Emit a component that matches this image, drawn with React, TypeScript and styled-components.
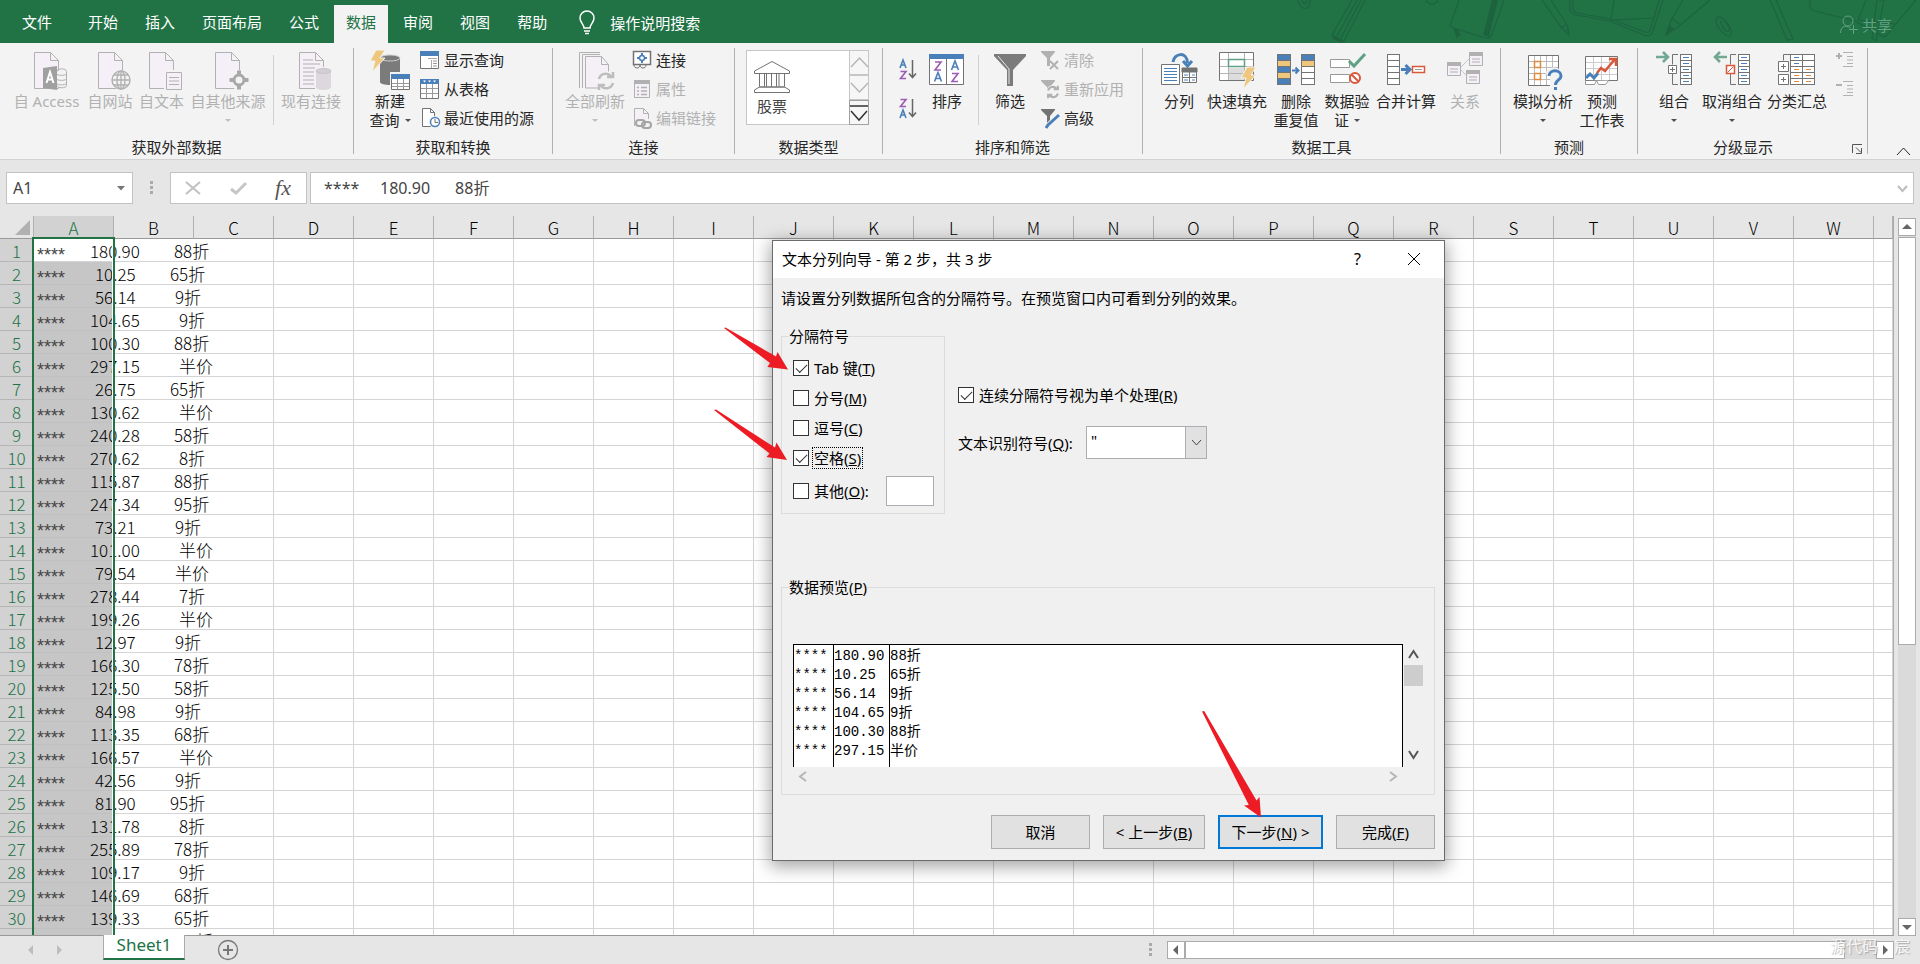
import React, { useState } from "react";
import styled, { createGlobalStyle, css } from "styled-components";

const ui = `"Noto Sans", "Noto Sans CJK SC", sans-serif`;
const green = "#217346";

const GlobalStyle = createGlobalStyle`
  *, *::before, *::after { box-sizing: border-box; }
  body { margin: 0; overflow: hidden; font: 15px/20px ${ui}; color: #262626; background: #e6e6e6; }
  button, input, select { font: inherit; color: inherit; }
  button { padding: 0; border: 0; background: none; }
  svg { display: block; overflow: visible; flex: none; }
`;

/* ---------- page frame ---------- */

const Page = styled.div`
  position: relative;
  display: flex;
  flex-direction: column;
  height: 100vh;
`;

const Header = styled.header`
  position: relative;
  display: flex;
  align-items: center;
  flex: none;
  height: 43px;
  padding-right: 28px;
  background: ${green};
  color: #fff;
`;

const Pattern = styled.svg`
  position: absolute;
  top: 0;
  right: 0;
`;

const Tabs = styled.nav`
  display: flex;
  align-self: stretch;
  gap: 3px;
  padding-top: 5px;
`;

const Tab = styled.button<{ $active?: boolean; $file?: boolean }>`
  padding: 0 12px 4px;
  ${(p) => p.$file && css`padding: 0 21px 4px 22px;`}
  ${(p) => p.$active && css`background: #f3f3f3; color: ${green};`}
`;

const TellMe = styled.button`
  display: flex;
  align-items: center;
  gap: 15px;
  margin-left: 20px;
  padding-top: 3px;
`;

const Share = styled.button`
  position: relative;
  display: flex;
  align-items: center;
  gap: 4px;
  margin-left: auto;
  padding-top: 6px;
  color: #63a181;
`;

/* ---------- ribbon ---------- */

const Ribbon = styled.section`
  position: relative;
  display: flex;
  flex: none;
  height: 117px;
  padding-top: 5px;
  background: #f3f3f3;
  border-bottom: 1px solid #d2d2d2;
`;

const Group = styled.section<{ $w: number; $pad: number }>`
  display: flex;
  flex-direction: column;
  justify-content: space-between;
  flex: none;
  width: ${(p) => p.$w}px;
  height: 106px;
  border-right: 1px solid #b1b1b1;
  & > div { padding-left: ${(p) => p.$pad}px; }
`;

const GroupBody = styled.div`
  display: flex;
  padding-top: 2px;
`;

const GroupLabel = styled.footer`
  display: flex;
  justify-content: center;
  align-items: center;
  gap: 4px;
  height: 14px;
  line-height: 14px;
`;

const LabelText = styled.span`
  flex: 1;
  text-align: center;
`;

const Launcher = styled.button`
  margin-right: 4px;
  padding-top: 4px;
`;

const BigButton = styled.button<{ $w: number }>`
  display: flex;
  flex-direction: column;
  align-items: center;
  flex: none;
  width: ${(p) => p.$w}px;
  height: 82px;
  line-height: 19px;
  white-space: nowrap;
  &:disabled { color: #b1b1b1; }
`;

const BigLine = styled.span`
  display: flex;
  align-items: center;
  gap: 5px;
  height: 19px;
`;

const Caret = styled.i`
  border: 3px solid transparent;
  border-top-color: currentColor;
  border-bottom-width: 0;
  opacity: 0.8;
`;

const Stack = styled.div<{ $left?: number }>`
  display: flex;
  flex-direction: column;
  margin-left: ${(p) => p.$left ?? 0}px;
`;

const SmallButton = styled.button`
  display: flex;
  align-items: center;
  gap: 4px;
  height: 29px;
  padding-bottom: 9px;
  white-space: nowrap;
  &:disabled { color: #b1b1b1; }
`;

const SortButton = styled.button`
  width: 24px;
  height: 39px;
`;

const Divider = styled.i<{ $l: number; $r: number }>`
  width: 1px;
  height: 70px;
  margin: 5px ${(p) => p.$r}px 0 ${(p) => p.$l}px;
  background: #d0d0d0;
`;

const Gallery = styled.div`
  display: flex;
  width: 123px;
  height: 75px;
  border: 1px solid #c6c6c6;
  background: #fff;
`;

const Stock = styled.button`
  display: flex;
  flex-direction: column;
  align-items: flex-start;
  flex: 1;
  gap: 3px;
  padding: 10px 0 0 7px;
  color: #444;
`;

const StockLabel = styled.span`
  padding-left: 3px;
`;

const GallerySteps = styled.div`
  display: grid;
  grid-template-rows: repeat(3, 1fr);
  width: 20px;
  margin: -1px;
`;

const Step = styled.button<{ $dark?: boolean }>`
  display: grid;
  place-items: center;
  border: 1px solid ${(p) => (p.$dark ? "#a0a0a0" : "#c6c6c6")};
  background: #f6f6f6;
  color: ${(p) => (p.$dark ? "#333" : "#b5b5b5")};
`;

const Collapse = styled.button`
  align-self: flex-end;
  margin: 0 10px 4px auto;
`;

/* ---------- formula bar ---------- */

const FormulaBar = styled.section`
  display: flex;
  align-items: center;
  flex: none;
  height: 56px;
  padding: 0 6px;
  color: #444;
  font-size: 16px;
`;

const Box = styled.div`
  display: flex;
  align-items: center;
  height: 32px;
  border: 1px solid #c3c3c3;
  background: #fff;
`;

const NameBox = styled(Box)`
  width: 127px;
  padding-right: 7px;
`;

const BarInput = styled.input`
  flex: 1;
  min-width: 0;
  padding: 0 0 0 6px;
  border: 0;
  outline: 0;
  background: none;
`;

const Dots = styled.svg`
  margin: 0 17px;
`;

const FxBox = styled(Box)`
  width: 137px;
  justify-content: space-between;
  padding: 0 15px 0 14px;
`;

const Fx = styled.button`
  font: italic 22px/24px "Liberation Serif", serif;
  color: #555;
`;

const FormulaBox = styled(Box)`
  flex: 1;
  margin-left: 3px;
  padding: 0 6px 0 7px;
`;

const Expand = styled.button`
  color: #bdbdbd;
`;

/* ---------- sheet ---------- */

const SheetArea = styled.main`
  display: flex;
  flex: 1;
  min-height: 0;
  padding-right: 4px;
`;

const GridPane = styled.div`
  position: relative;
  flex: 1;
  overflow: hidden;
  background: #fff;
  border-right: 1px solid #ababab;
  border-bottom: 1px solid #999;
`;

const Grid = styled.table`
  width: 100%;
  table-layout: fixed;
  border-collapse: separate;
  border-spacing: 0;
  font: 300 17px/22px "Noto Sans CJK SC", sans-serif;
  color: #000;
`;

const RowNoCol = styled.col`width: 34px;`;
const DataCol = styled.col`width: 80px;`;

const ColHead = styled.th<{ $on?: boolean }>`
  height: 23px;
  padding: 2px 0 0;
  border-right: 1px solid #b1b1b1;
  border-bottom: 1px solid #999;
  background: ${(p) => (p.$on ? "#d2d2d2" : "#e6e6e6")};
  color: ${(p) => (p.$on ? green : "#000")};
  font-size: 17px;
  font-weight: 300;
  line-height: 20px;
`;

const Corner = styled(ColHead)`
  padding: 0 3px 3px 15px;
  vertical-align: bottom;
`;

const RowHead = styled.th`
  height: 23px;
  padding: 2px 1px 0 0;
  border-bottom: 1px solid #b5b5b5;
  background: #d2d2d2;
  color: ${green};
  font-size: 17px;
  font-weight: 300;
  line-height: 20px;
  text-align: center;
`;

const Cell = styled.td<{ $fill?: boolean; $open?: boolean }>`
  height: 23px;
  padding: 0;
  border-right: ${(p) => (p.$open ? "0" : "1px solid #d4d4d4")};
  border-bottom: 1px solid ${(p) => (p.$fill ? "#c0c0c0" : "#d4d4d4")};
  background: ${(p) => (p.$fill ? "#c6c6c6" : "transparent")};
`;

const Record = styled.div`
  position: relative;
  display: flex;
  width: 200px;
  height: 22px;
  padding: 2px 0 0 3px;
  line-height: 20px;
  white-space: nowrap;
`;

const Stars = styled.span<{ $short: boolean }>`
  width: ${(p) => (p.$short ? 58 : 53)}px;
  padding-top: 4px;
  font-family: "Liberation Sans", sans-serif;
  font-size: 18px;
  color: #444;
`;

const Amount = styled.span<{ $short: boolean }>`
  width: ${(p) => (p.$short ? 75 : 84)}px;
`;

const Discount = styled.span<{ $indent: boolean }>`
  padding-left: ${(p) => (p.$indent ? 5 : 0)}px;
`;

const Selection = styled.div`
  position: absolute;
  top: 21px;
  bottom: -4px;
  left: 32px;
  width: 83px;
  border: 2px solid ${green};
  box-shadow: inset -1px 0 0 #fff;
`;

const VScroll = styled.div`
  display: flex;
  flex-direction: column;
  width: 18px;
  margin: 2px 0 0 4px;
  background: #dadada;
`;

const ScrollButton = styled.button`
  display: grid;
  place-items: center;
  flex: none;
  width: 18px;
  height: 18px;
  border: 1px solid #ababab;
  background: #fff;
  color: #666;
`;

const VThumb = styled.i`
  flex: 406 0 0;
  margin-top: 1px;
  border: 1px solid #ababab;
  background: #fff;
`;

const VTrack = styled.i`flex: 273 0 0;`;

/* ---------- sheet tabs ---------- */

const Bottom = styled.footer`
  position: relative;
  display: flex;
  align-items: center;
  flex: none;
  height: 28px;
  padding: 0 26px 0;
`;

const TabNav = styled.div`
  display: flex;
  gap: 18px;
  color: #bdbdbd;
`;

const SheetTab = styled.button`
  align-self: flex-start;
  width: 82px;
  height: 25px;
  margin: -1px 32px 0 39px;
  padding-bottom: 3px;
  border: 1px solid #ababab;
  border-top: 0;
  border-bottom: 2px solid ${green};
  background: #fff;
  color: ${green};
  font-size: 17px;
  line-height: 20px;
`;

const Spacer = styled.i`flex: 1;`;

const HScroll = styled.div`
  display: flex;
  width: 727px;
  height: 18px;
  margin-left: 15px;
  background: #dadada;
`;

const HThumb = styled.i`
  flex: 660 0 0;
  border: 1px solid #ababab;
  background: #fff;
`;

const HTrack = styled.i`flex: 31 0 0;`;

const Watermark = styled.span`
  position: absolute;
  top: 0;
  right: 10px;
  font-size: 16px;
  color: #fff;
  opacity: 0.75;
  text-shadow: 1px 1px 1px #999;
  white-space: pre;
  pointer-events: none;
`;

/* ---------- dialog ---------- */

const Dialog = styled.form`
  position: absolute;
  top: 240px;
  left: 772px;
  width: 673px;
  border: 1px solid #6b6b6b;
  background: #f0f0f0;
  color: #000;
  box-shadow: 0 4px 16px 2px rgba(0, 0, 0, 0.35);
`;

const TitleBar = styled.header`
  display: flex;
  align-items: center;
  height: 37px;
  padding: 0 23px 2px 9px;
  background: #fff;
`;

const Title = styled.h1`
  flex: 1;
  margin: 0;
  font-size: 15px;
  font-weight: 400;
`;

const Help = styled.button`
  margin-right: 46px;
  font-size: 16px;
`;

const DialogBody = styled.div`
  padding: 10px 9px 11px 8px;
`;

const Intro = styled.p`margin: 0 0 18px;`;

const Options = styled.div`
  display: flex;
  margin-bottom: 63px;
`;

const FieldSet = styled.fieldset`
  min-width: 0;
  margin: 0;
  padding: 0 7px 7px;
  border: 1px solid #dcdcdc;
`;

const DelimiterSet = styled(FieldSet)`width: 164px;`;

const Legend = styled.legend`padding: 0;`;

const Checks = styled.div`
  display: flex;
  flex-direction: column;
  padding: 7px 3px 0 4px;
`;

const CheckRow = styled.div<{ $gap?: boolean }>`
  display: flex;
  align-items: center;
  height: 30px;
  margin-top: ${(p) => (p.$gap ? 3 : 0)}px;
`;

const Check = styled.input`
  appearance: none;
  display: grid;
  place-items: center;
  flex: none;
  width: 16px;
  height: 16px;
  margin: 0 3px 0 0;
  border: 1px solid #333;
  background: #fff;
  &:checked::before {
    content: "";
    width: 11px;
    height: 6px;
    margin-top: -3px;
    border: solid #333;
    border-width: 0 0 1px 1px;
    transform: rotate(-45deg);
  }
`;

const CheckLabel = styled.label<{ $focus?: boolean }>`
  padding: 0 1px;
  border: 1px dotted ${(p) => (p.$focus ? "#000" : "transparent")};
  white-space: nowrap;
`;

const OtherInput = styled.input`
  width: 48px;
  height: 30px;
  margin-left: auto;
  border: 1px solid #abadb3;
  background: #fff;
`;

const SideOptions = styled.div`
  display: flex;
  flex-direction: column;
  gap: 16px;
  padding: 54px 0 0 13px;
`;

const SelectRow = styled.div`
  display: flex;
  align-items: center;
`;

const SelectLabel = styled.label`width: 128px;`;

const SelectWrap = styled.div`
  position: relative;
  width: 121px;
`;

const Select = styled.select`
  appearance: none;
  display: block;
  width: 100%;
  height: 33px;
  padding: 0 26px 6px 4px;
  border: 1px solid #abadb3;
  border-radius: 0;
  background: #fff;
`;

const SelectArrow = styled.span`
  position: absolute;
  inset: 0 0 0 auto;
  display: grid;
  place-items: center;
  width: 22px;
  border: 1px solid #abadb3;
  background: #e1e1e1;
  color: #444;
  pointer-events: none;
`;

const Preview = styled.div`
  display: grid;
  grid-template-columns: 1fr 20px;
  grid-template-rows: 123px 20px;
  padding: 47px 4px 0;
`;

const PreviewPane = styled.div`
  overflow: hidden;
  border: 1px solid #000;
  border-bottom: 0;
  background: #fff;
`;

const PreviewTable = styled.table`
  width: 100%;
  height: 122px;
  table-layout: fixed;
  border-collapse: separate;
  border-spacing: 0;
  font: 14px/18px "Liberation Mono", "Noto Sans CJK SC", monospace;
  color: #000;
  tr:first-child td { padding-top: 2px; height: 21px; }
  tr:last-child td { height: auto; }
`;

const PreviewCell = styled.td<{ $w?: number; $last?: boolean }>`
  ${(p) => p.$w && css`width: ${p.$w}px;`}
  height: 19px;
  padding: 0;
  border-right: ${(p) => (p.$last ? "0" : "1px solid #000")};
  vertical-align: top;
`;

const PreviewScroll = styled.div`
  display: flex;
  flex-direction: column;
  align-items: center;
  padding: 7px 0 9px;
  color: #555;
`;

const PreviewThumb = styled.i`
  width: 19px;
  height: 21px;
  margin: 7px 0 auto;
  background: #cdcdcd;
`;

const PreviewHScroll = styled.div`
  display: flex;
  justify-content: space-between;
  align-items: center;
  padding: 0 7px 2px;
  color: #b5b5b5;
`;

const Actions = styled.div`
  display: flex;
  justify-content: flex-end;
  gap: 13px;
  margin-top: 20px;
`;

const Action = styled.button<{ $w: number; $primary?: boolean }>`
  width: ${(p) => p.$w}px;
  height: 34px;
  border: ${(p) => (p.$primary ? "2px solid #0078d7" : "1px solid #adadad")};
  background: #e1e1e1;
`;

const Pointers = styled.svg`
  position: absolute;
  top: 0;
  left: 0;
  pointer-events: none;
`;

/* ---------- icons ---------- */

const G = "#b1b1b1";
const D = "#737373";
const B = "#4a80b9";
const Y = "#efc77c";
const P = "#f5f0f7";

const Big = ({ children }: { children: React.ReactNode }) => (
  <svg width="40" height="42" fill="none" strokeWidth="1" aria-hidden="true">{children}</svg>
);
const Small = ({ children }: { children: React.ReactNode }) => (
  <svg width="20" height="20" fill="none" strokeWidth="1" aria-hidden="true">{children}</svg>
);
const Sheet = ({ x = 7 }: { x?: number }) => (
  <path transform={`translate(${x} 0)`} d="M.5 2.5h16l8 8V38.500H.5zM16.500 2.500v8h8" fill={P} stroke={G} />
);
const Chevron = ({ d, w = 13, h = 7, sw = 1 }: { d: "up" | "down" | "left" | "right"; w?: number; h?: number; sw?: number }) => {
  const paths = {
    up: `M0 ${h}L${w / 2} 0L${w} ${h}`,
    down: `M0 0L${w / 2} ${h}L${w} 0`,
    left: `M${w} 0L0 ${h / 2}L${w} ${h}`,
    right: `M0 0L${w} ${h / 2}L0 ${h}`,
  };
  return <svg width={w} height={h} fill="none" stroke="currentColor" strokeWidth={sw} aria-hidden="true"><path d={paths[d]} /></svg>;
};
const Tri = ({ d }: { d: "up" | "down" | "left" | "right" }) => {
  const paths = { up: "M0 7L5 2L10 7z", down: "M0 3L5 8L10 3z", left: "M7 0L2 5L7 10z", right: "M3 0L8 5L3 10z" };
  return <svg width="10" height="10" fill="currentColor" aria-hidden="true"><path d={paths[d]} /></svg>;
};

const AccessIcon = () => (
  <Big>
    <Sheet />
    <path d="M30 21v16h10V21z" fill="#f3f3f3" />
    <path d="M30 21.500c0-3.500 9.500-3.500 9.500 0v14c0 3-9.500 3-9.500 0M30 24.500c3 1.500 9.500 1 9.500-1M30 29.500c3 1.500 9.500 1 9.500-1M30 34c3 1.500 9.500 1 9.500-1" stroke={G} />
    <path d="M16 18l14-2v24l-14-2z" fill="#a0a0a0" />
    <path d="M19.500 33l3.500-11 3.500 11M20.500 29.500h5" stroke="#fff" strokeWidth="2" />
  </Big>
);
const WebIcon = () => (
  <Big>
    <Sheet x={8} />
    <circle cx="31" cy="30" r="10" fill="#f3f3f3" />
    <g stroke={G} strokeWidth="1.400"><circle cx="31" cy="30" r="9" /><ellipse cx="31" cy="30" rx="4" ry="9" /><path d="M22 30h18M31 21v18M24 25h14M24 35h14" /></g>
  </Big>
);
const TextIcon = () => (
  <Big><Sheet /><path d="M22 20h18v20H22z" fill="#f3f3f3" /><path d="M24.500 22.500h15v17h-15z" fill={P} stroke={G} /><path d="M27 27.500h10M27 31h10M27 34.500h10" stroke={G} /></Big>
);
const OtherIcon = () => (
  <Big><Sheet /><circle cx="31" cy="30" r="10" fill="#f3f3f3" /><circle cx="31" cy="30" r="5" stroke="#a8a8a8" strokeWidth="3" /><path d="M31 20.500v5M31 34.500v5M21.500 30h5M35.500 30h5" stroke="#a8a8a8" strokeWidth="4" /></Big>
);
const ConnIcon = () => (
  <Big>
    <Sheet x={8} />
    <path d="M12 10h10M12 14h17M12 18h17M12 22h11M12 26h11M12 30h11M12 34h11" stroke={G} />
    <path d="M24 17h18v24H24z" fill="#f3f3f3" />
    <path d="M25 21v16c0 4 15 4 15 0V21" fill="#dcd8de" /><ellipse cx="32.500" cy="21" rx="7.500" ry="2.500" fill="#d3ced6" stroke="#c8c3cb" />
  </Big>
);
const bolt = "M6 0h9l-5 8h5L2 22l3-11H0z";
const NewQueryIcon = () => (
  <Big>
    <path d="M10 8v24c0 4 20 4 20 0V8z" fill="#7b7b7b" /><ellipse cx="20" cy="8" rx="10" ry="3" fill="#7b7b7b" stroke="#ccc" />
    <path d={bolt} fill={Y} stroke="#f3f3f3" />
    <path d="M20 22h21v19H20z" fill="#f3f3f3" /><path d="M21.500 24.500h18v15h-18z" fill="#fff" stroke={D} />
    <path d="M21 24h19v5H21z" fill={B} /><path d="M22 33.500h17M22 36.500h17M27.500 29v10M33.500 29v10" stroke="#999" />
  </Big>
);
const arc = "M-7-2a7 7 0 0 1 12-3M7-9v5h-6M7 2a7 7 0 0 1-12 3M-7 9v-5h6";
const RefreshIcon = () => (
  <Big>
    <path d="M4.500 38V2.500H25M7.500 38V4.500H25" stroke={G} /><g transform="translate(3 4)"><path d="M7.500 2.500h16l7 8V34H7.500zM23.500 2.500v8h7" fill={P} stroke={G} /></g>
    <circle cx="31" cy="31" r="10" fill="#f3f3f3" /><path transform="translate(31 31)" d={arc} stroke="#bdbdbd" strokeWidth="2.500" />
  </Big>
);
const SortIcon = () => (
  <Big>
    <path d="M2.500 4.500h34v30h-34zM19.500 9v25" fill="#fff" stroke={D} /><path d="M2 4h35v5H2z" fill={B} />
    <g fill="none" strokeWidth="1.600"><path d="M8 12h6l-6 8h6M25 23.500h6l-6 8h6" stroke="#9a5cb5" /><path d="M7.500 31.500l3.500-9 3.500 9M9 28.500h4M24.500 20l3.500-9 3.500 9M26 17h4" stroke={B} /></g>
  </Big>
);
const AZIcon = ({ flip }: { flip?: boolean }) => (
  <svg width="18" height="22" fill="none" strokeWidth="1.600" aria-hidden="true">
    <g transform={flip ? "translate(0 11)" : undefined}><path d="M1 9l3-8 3 8M2 6h4" stroke={B} /></g>
    <g transform={flip ? "translate(0 -11)" : undefined}><path d="M1.500 12.500h5.500l-5.500 7h5.500" stroke="#9a5cb5" /></g>
    <path d="M13.500 1v17M10 14.500l3.500 4 3.500-4" stroke="#666" strokeWidth="1.500" />
  </svg>
);
const funnel = "M4 4h32v2L23 20v16h-6V20L4 6z";
const FilterIcon = () => <Big><path d={funnel} fill="#7b7b7b" /><path d="M8 6l11 13v15" stroke="#e8e8e8" /></Big>;
const SplitIcon = () => (
  <Big>
    <path d="M2.500 14.500h18v20h-18z" fill="#fff" stroke={D} /><path d="M5 18.500h13M5 21.500h13M5 24.500h13M5 27.500h13M5 30.500h13" stroke={B} />
    <path d="M23.500 18.500h14v14h-14z" fill="#fff" stroke={D} /><path d="M23 18h15v4H23zM30.500 22v10M23 27.500h15" stroke={D} fill={D} />
    <path d="M25 25h4M33 25h3M25 30h4M33 30h3" stroke={B} />
    <path d="M14 12C15 3 28 1 28.500 13M24 11l4.500 5 4.500-5" stroke={B} strokeWidth="3" />
  </Big>
);
const FillIcon = () => (
  <Big>
    <path d="M2.500 2.500h34v28h-34z" fill="#fff" stroke={D} /><path d="M11 18h17v12H11z" fill="#ddd" />
    <path d="M11.500 3v27M27.500 3v27M3 9.500h33M3 16.500h33M3 23.500h33" stroke="#b5b5b5" /><path d="M11.500 9.500h16v7h-16z" fill="#fff" stroke="#5fa184" strokeWidth="1.500" />
    <path transform="translate(24 17)" d={bolt} fill={Y} stroke="#f3f3f3" />
  </Big>
);
const Rows = ({ x, w, fills, stroke = D }: { x: number; w: number; fills: string[]; stroke?: string }) => (
  <>{fills.map((f, i) => <rect key={i} x={x + 0.5} y={4.5 + i * 6} width={w} height={6} fill={f} stroke={stroke} />)}</>
);
const DedupIcon = () => (
  <Big>
    <Rows x={1} w={13} fills={[B, Y, B, Y, B]} /><Rows x={25} w={13} fills={[B, Y, "#fff", "#fff", "#fff"]} />
    <path d="M16 20.500h6M19.500 17.500l3 3-3 3" stroke={B} strokeWidth="2" />
  </Big>
);
const ValidIcon = () => (
  <Big>
    <path d="M3.500 9.500h19v8h-19zM3.500 24.500h19v8h-19z" fill="#fff" stroke="#999" /><path d="M22 11l5 5L38 4" stroke="#5fa184" strokeWidth="3" />
    <circle cx="28" cy="28" r="5" fill="#fff" stroke="#d9573b" strokeWidth="2" /><path d="M24.500 24.500l7 7" stroke="#d9573b" strokeWidth="2" />
  </Big>
);
const ConsIcon = () => (
  <Big>
    <Rows x={1} w={12} fills={["#fff", "#fff", "#fff", "#fff", "#fff"]} /><path d="M15 19.500h8M19.500 15l4.500 4.500-4.500 4.500" stroke={B} strokeWidth="3" />
    <path d="M26.500 16.500h12v6h-12z" fill="#fff" stroke="#d9573b" strokeWidth="1.500" /><path d="M29 19.500h7" stroke="#999" />
  </Big>
);
const RelIcon = () => (
  <Big>
    <path d="M15 18l9-9M15 19l7 7" stroke="#c5c5c5" />
    {[[2, 12], [24, 2], [21, 20]].map(([x, y]) => (
      <g key={x} transform={`translate(${x} ${y})`}><path d="M.5.5h13v13H.5z" fill={P} stroke={G} /><path d="M0 0h14v4H0z" fill={G} /><path d="M3 7h8M3 10h8" stroke={G} /></g>
    ))}
  </Big>
);
const WhatIfIcon = () => (
  <Big>
    <path d="M5.500 5.500h30v30h-30z" fill="#fff" stroke={D} /><path d="M11.500 6v29M17.500 6v29M23.500 6v29M29.500 6v29M6 11.500h29M6 17.500h29M6 23.500h29M6 29.500h29" stroke="#bbb" />
    <path d="M11.500 11.500h6v6h-6zM11.500 23.500h6v6h-6z" stroke="#e08a3c" strokeWidth="1.500" />
    <path d="M23 24c0-9 17-9 17 2v15H27V27z" fill="#f3f3f3" /><path d="M26 26c0-7 12-7 12 0 0 4-5.500 4-5.500 9M32.500 37v3" stroke={B} strokeWidth="3" />
  </Big>
);
const ForecastIcon = () => (
  <Big>
    <path d="M3.500 6.500h32v24h-32z" fill="#fff" stroke={D} /><path d="M11.500 7v23M19.500 7v23M27.500 7v23M4 12.500h31M4 18.500h31M4 24.500h31" stroke="#ccc" />
    <path d="M3.500 31v3.500h9l2-4 2 4h7l3-4" fill="#fff" stroke="#999" /><path d="M4 28l4-4 4 4 4-5" stroke={B} strokeWidth="3" /><path d="M15 23l4-5 4 3 10-12M27 9h7v7" stroke="#d9573b" strokeWidth="2.500" />
  </Big>
);
const GroupIcon = ({ un }: { un?: boolean }) => (
  <Big>
    <path d={un ? "M15 7H4M8 2L3 7l5 5" : "M2 7h11M9 2l5 5-5 5"} stroke="#72a892" strokeWidth="2.500" />
    <path d="M24 4.500h-5.500v10M18.500 24v10.500H24" stroke={D} /><path d="M14.500 15.500h8v8h-8z" fill="#fff" stroke={un ? "#d9573b" : D} strokeWidth={un ? 1.5 : 1} />
    <path d={un ? "M15.500 22.500l6-6" : "M16 19.500h5M18.500 17v5"} stroke={un ? "#d9573b" : D} />
    <Rows x={26} w={11} fills={["#fff", "#fff", "#fff", "#fff", "#fff"]} /><path d="M29 7.500h6M29 13.500h6M29 19.500h6M29 25.500h6M29 31.500h6" stroke={B} />
  </Big>
);
const SubtotalIcon = () => (
  <Big>
    <path d="M13 4.500H6.500v6" stroke={D} /><path d="M1.500 11.500h10v10h-10zM1.500 24.500h10v10h-10z" fill="#fff" stroke={D} /><path d="M4 16.500h5M6.500 14v5M4 29.500h5M6.500 27v5" stroke={D} />
    <Rows x={13} w={12} fills={["#fff", "#fff", "#fff", "#fff", "#fff"]} /><Rows x={25} w={12} fills={["#fff", "#fff", "#fff", "#fff", "#fff"]} />
    <path d="M17 7.500h5M17 13.500h5" stroke={B} /><path d="M17 19.500h5M17 25.500h5M17 31.500h5M29 19.500h5M29 25.500h5M29 31.500h5" stroke="#e08a3c" />
  </Big>
);
const BankIcon = () => (
  <svg width="36" height="32" fill="none" stroke="#737373" aria-hidden="true">
    <path d="M.5 10L18 .5 35.500 10v2.500H.5zM5.500 12.500v13M10.500 12.500v13M12.500 12.500v13M17.500 12.500v13M22.500 12.500v13M25 12.500v13M30.500 12.500v13M5 26h26M.5 31.500v-2.500l5-3h25l5 3v2.500z" />
  </svg>
);
const PaneIcon = () => <Small><path d="M.5 1.500h18v17H.5z" fill="#fff" stroke={D} /><path d="M0 1h19v5H0z" fill={B} /><path d="M8 8.500h9M11.500 10v8" stroke="#aaa" /><path d="M13 11h4M13 13.500h4M13 16h4" stroke="#999" /></Small>;
const TableIcon = () => <Small><path d="M.5.5h18v19H.5z" fill="#fff" stroke={D} /><path d="M0 0h19v5H0z" fill={B} /><path d="M3 1.500h3l-1.500 2zM8 1.500h3l-1.500 2zM13 1.500h3l-1.500 2z" fill="#fff" /><path d="M1 9.500h17M1 14.500h17M6.500 5v14M12.500 5v14" stroke="#999" /></Small>;
const RecentIcon = () => <Small><path d="M2.500.5h8l4 4v14h-12zM10.500.5v4h4" fill="#fff" stroke={D} /><circle cx="15" cy="14" r="6" fill="#f3f3f3" /><circle cx="15" cy="14" r="4.500" fill="#fff" stroke={B} strokeWidth="1.500" /><path d="M15 11v3.500h3" stroke={D} /></Small>;
const LinkIcon = () => <Small><path d="M1.500 1.500h17v13h-17z" fill="#fff" stroke={D} strokeWidth="1.500" /><path d="M2 15c0 4 6 4 6 0M8 15c0 4 6 4 6 0" stroke={D} /><circle cx="10" cy="8" r="2.500" stroke={B} strokeWidth="1.500" /><path d="M10 3v2M10 11v2M5 8h2M13 8h2" stroke={B} strokeWidth="2" /></Small>;
const PropIcon = () => <Small><path d="M2.500 1.500h15v17h-15z" fill={P} stroke={G} /><path d="M2 1h16v4H2z" fill={G} /><path d="M9 8.500h6M9 12h6M9 15.500h6M5 8.500h2M5 12h2M5 15.500h2" stroke={G} strokeWidth="1.500" /></Small>;
const EditLinkIcon = () => <Small><path d="M2.500 18V.5h9l5 5V11M11.500.5v5h5" fill={P} stroke={G} /><rect x="4" y="12" width="9" height="6" rx="3" stroke="#a5a5a5" strokeWidth="2" /><rect x="10" y="14" width="9" height="6" rx="3" stroke="#a5a5a5" strokeWidth="2" /></Small>;
const smallFunnel = "M1 1h14v1l-5 6v8H7V8L1 2z";
const ClearIcon = () => <Small><path d={smallFunnel} fill={G} /><path d="M10 11l8 8M18 11l-8 8" stroke={G} strokeWidth="2" /></Small>;
const ReapplyIcon = () => <Small><path d={smallFunnel} fill={G} /><circle cx="13" cy="13" r="7" fill="#f3f3f3" /><path transform="translate(13 13) scale(.7)" d={arc} stroke={G} strokeWidth="3" /></Small>;
const AdvIcon = () => <Small><path d={smallFunnel} fill={D} /><path d="M19 7L8 18" stroke="#f3f3f3" strokeWidth="6" /><path d="M19 7L8 17l-2 3" stroke={B} strokeWidth="3" /></Small>;
const DetailIcon = ({ plus }: { plus?: boolean }) => (
  <svg width="18" height="29" fill="none" stroke={G} aria-hidden="true"><path d={plus ? "M0 6h6M3 3v6" : "M0 6h6"} strokeWidth="2" /><path d="M7 2.500h10M11 6.500h6M11 10h6M11 13.500h6M7 16.500h10" strokeWidth="1" /></svg>
);

/* ---------- data ---------- */

const records: [string, string][] = [
  ["180.90", "88折"], ["10.25", "65折"], ["56.14", "9折"], ["104.65", "9折"], ["100.30", "88折"],
  ["297.15", "半价"], ["26.75", "65折"], ["130.62", "半价"], ["240.28", "58折"], ["270.62", "8折"],
  ["115.87", "88折"], ["247.34", "95折"], ["73.21", "9折"], ["101.00", "半价"], ["79.54", "半价"],
  ["278.44", "7折"], ["199.26", "半价"], ["12.97", "9折"], ["166.30", "78折"], ["125.50", "58折"],
  ["84.98", "9折"], ["113.35", "68折"], ["166.57", "半价"], ["42.56", "9折"], ["81.90", "95折"],
  ["131.78", "8折"], ["255.89", "78折"], ["109.17", "9折"], ["146.69", "68折"], ["139.33", "65折"],
  ["", "　折"],
];
const letters = "ABCDEFGHIJKLMNOPQRSTUVW".split("");

type BigProps = { icon: React.ReactNode; w: number; lines: string[]; caret?: boolean; inline?: boolean; disabled?: boolean };
const RibbonButton = ({ icon, w, lines, caret, inline, disabled }: BigProps) => (
  <BigButton $w={w} type="button" disabled={disabled}>
    {icon}
    {lines.map((line, i) => (
      <BigLine key={line}>{line}{inline && i === lines.length - 1 && <Caret />}</BigLine>
    ))}
    {caret && <BigLine><Caret /></BigLine>}
  </BigButton>
);

const Mnemonic = ({ text, k, after = "" }: { text: string; k: string; after?: string }) => (
  <>{text}(<u>{k}</u>){after}</>
);

const HeaderPattern = () => (
  <Pattern width="640" height="43" fill="none" stroke="#1d6340" strokeWidth="1.200" aria-hidden="true">
    <path d="M18 0c2 12 14 12 12-3M22 0c1 5 6 5 5-1M72 0L52 35l12 6L85 0M77 0L57 36M81 0L61 38M146 0c4 6 9 5 12 0M179 0l-9 26 6 3 30 9c4 1 5-2 6-4L224 0" />
    <path d="M52 35l12 6-2 2-9-4zM212 0h6l-9 37-6-2zM173 28l4 11 1-4 3 2-3-8z" fill="#1d6340" stroke="none" />
    <path d="M262 0l19 27 8 8-2-10L271 0M281 28l6-4M290 0v9c0 4 2 5 6 6l34 6 34 14c6 2 8 0 9-4l10-31M293 0v8c0 3 1 4 4 5l34 6 34 13c4 1 5-1 6-4L379 0M334 0l-3 20 42-2M403 0l-12 20-5 15 12-8L430 0M391 18l10 7M437 18c-4 4 7 20 13 18 6-3-7-23-13-18zM441 21c-1 4 6 13 8 10s-3-9-5-9" />
    <path d="M389 24l-4 11 9-6zM287 30l2 5 0-9z" fill="#1d6340" stroke="none" />
    <path d="M490 0l17 40 6-1L496 0M530 0v6c0 3 2 4 5 5l40 10 25 14c5 3 7 1 9-3L636 0M586 0l-8 20 38 4M597 0h7l-8 41-4-3z" />
  </Pattern>
);

export default function App() {
  const [checks, setChecks] = useState<Record<string, boolean>>({ tab: true, semi: false, comma: false, space: true, other: false, merge: true });
  const toggle = (k: string) => () => setChecks((c) => ({ ...c, [k]: !c[k] }));
  const delimiters: [string, string, string, string][] = [
    ["tab", "Tab 键", "T", ""], ["semi", "分号", "M", ""], ["comma", "逗号", "C", ""], ["space", "空格", "S", ""], ["other", "其他", "O", ":"],
  ];

  return (
    <Page>
      <GlobalStyle />
      <Header>
        <HeaderPattern />
        <Tabs>
          {["文件", "开始", "插入", "页面布局", "公式", "数据", "审阅", "视图", "帮助"].map((t) => (
            <Tab key={t} type="button" $active={t === "数据"} $file={t === "文件"}>{t}</Tab>
          ))}
        </Tabs>
        <TellMe type="button">
          <svg width="16" height="24" fill="none" stroke="#fff" strokeWidth="1.500" aria-hidden="true">
            <path d="M5 17c0-4-4-5-4-10a7 7 0 0 1 14 0c0 5-4 6-4 10zM5 20h6M6 22.500h4" />
          </svg>
          操作说明搜索
        </TellMe>
        <Share type="button">
          <svg width="18" height="20" fill="none" stroke="currentColor" aria-hidden="true"><circle cx="8" cy="6" r="5" /><path d="M.5 18c0-9 8-7 10-5M13.500 10v9M9 14.500h9" /></svg>
          共享
        </Share>
      </Header>

      <Ribbon>
        <Group $w={354} $pad={8}>
          <GroupBody>
            <RibbonButton icon={<AccessIcon />} w={77} lines={["自 Access"]} disabled />
            <RibbonButton icon={<WebIcon />} w={50} lines={["自网站"]} disabled />
            <RibbonButton icon={<TextIcon />} w={53} lines={["自文本"]} disabled />
            <RibbonButton icon={<OtherIcon />} w={80} lines={["自其他来源"]} caret disabled />
            <Divider $l={5} $r={4} />
            <RibbonButton icon={<ConnIcon />} w={66} lines={["现有连接"]} disabled />
          </GroupBody>
          <GroupLabel>获取外部数据</GroupLabel>
        </Group>
        <Group $w={199} $pad={8}>
          <GroupBody>
            <RibbonButton icon={<NewQueryIcon />} w={56} lines={["新建", "查询"]} inline />
            <Stack $left={2}>
              <SmallButton type="button"><PaneIcon />显示查询</SmallButton>
              <SmallButton type="button"><TableIcon />从表格</SmallButton>
              <SmallButton type="button"><RecentIcon />最近使用的源</SmallButton>
            </Stack>
          </GroupBody>
          <GroupLabel>获取和转换</GroupLabel>
        </Group>
        <Group $w={182} $pad={8}>
          <GroupBody>
            <RibbonButton icon={<RefreshIcon />} w={68} lines={["全部刷新"]} caret disabled />
            <Stack $left={3}>
              <SmallButton type="button"><LinkIcon />连接</SmallButton>
              <SmallButton type="button" disabled><PropIcon />属性</SmallButton>
              <SmallButton type="button" disabled><EditLinkIcon />编辑链接</SmallButton>
            </Stack>
          </GroupBody>
          <GroupLabel>连接</GroupLabel>
        </Group>
        <Group $w={148} $pad={11}>
          <GroupBody>
            <Gallery>
              <Stock type="button"><BankIcon /><StockLabel>股票</StockLabel></Stock>
              <GallerySteps>
                <Step type="button" aria-label="上一行"><Chevron d="up" w={17} h={9} sw={1.5} /></Step>
                <Step type="button" aria-label="下一行"><Chevron d="down" w={17} h={9} sw={1.5} /></Step>
                <Step type="button" aria-label="其他" $dark>
                  <svg width="18" height="16" fill="none" stroke="currentColor" strokeWidth="1.500" aria-hidden="true"><path d="M0 1h18M1 6l8 9 8-9" /></svg>
                </Step>
              </GallerySteps>
            </Gallery>
          </GroupBody>
          <GroupLabel>数据类型</GroupLabel>
        </Group>
        <Group $w={260} $pad={16}>
          <GroupBody>
            <Stack>
              <SortButton type="button" aria-label="升序"><AZIcon /></SortButton>
              <SortButton type="button" aria-label="降序"><AZIcon flip /></SortButton>
            </Stack>
            <RibbonButton icon={<SortIcon />} w={48} lines={["排序"]} />
            <Divider $l={7} $r={8} />
            <RibbonButton icon={<FilterIcon />} w={46} lines={["筛选"]} />
            <Stack $left={7}>
              <SmallButton type="button" disabled><ClearIcon />清除</SmallButton>
              <SmallButton type="button" disabled><ReapplyIcon />重新应用</SmallButton>
              <SmallButton type="button"><AdvIcon />高级</SmallButton>
            </Stack>
          </GroupBody>
          <GroupLabel>排序和筛选</GroupLabel>
        </Group>
        <Group $w={358} $pad={13}>
          <GroupBody>
            <RibbonButton icon={<SplitIcon />} w={46} lines={["分列"]} />
            <RibbonButton icon={<FillIcon />} w={70} lines={["快速填充"]} />
            <RibbonButton icon={<DedupIcon />} w={48} lines={["删除", "重复值"]} />
            <RibbonButton icon={<ValidIcon />} w={54} lines={["数据验", "证"]} inline />
            <RibbonButton icon={<ConsIcon />} w={64} lines={["合并计算"]} />
            <RibbonButton icon={<RelIcon />} w={54} lines={["关系"]} disabled />
          </GroupBody>
          <GroupLabel>数据工具</GroupLabel>
        </Group>
        <Group $w={137} $pad={8}>
          <GroupBody>
            <RibbonButton icon={<WhatIfIcon />} w={68} lines={["模拟分析"]} caret />
            <RibbonButton icon={<ForecastIcon />} w={50} lines={["预测", "工作表"]} />
          </GroupBody>
          <GroupLabel>预测</GroupLabel>
        </Group>
        <Group $w={230} $pad={12}>
          <GroupBody>
            <RibbonButton icon={<GroupIcon />} w={48} lines={["组合"]} caret />
            <RibbonButton icon={<GroupIcon un />} w={68} lines={["取消组合"]} caret />
            <RibbonButton icon={<SubtotalIcon />} w={62} lines={["分类汇总"]} />
            <Stack $left={8}><DetailIcon plus /><DetailIcon /></Stack>
          </GroupBody>
          <GroupLabel>
            <LabelText>分级显示</LabelText>
            <Launcher type="button" aria-label="分级显示设置">
              <svg width="11" height="10" fill="none" stroke="#555" aria-hidden="true"><path d="M.5 9V.5H10M4 3.500l5 5M9.500 4v5.500H4" /></svg>
            </Launcher>
          </GroupLabel>
        </Group>
        <Collapse type="button" aria-label="折叠功能区"><Chevron d="up" w={13} h={7} /></Collapse>
      </Ribbon>

      <FormulaBar>
        <NameBox>
          <BarInput aria-label="名称框" defaultValue="A1" />
          <svg width="8" height="5" fill="#777" aria-hidden="true"><path d="M0 0h8L4 4.500z" /></svg>
        </NameBox>
        <Dots width="3" height="14" fill="#aaa"><path d="M0 0h3v3H0zM0 5h3v3H0zM0 10h3v3H0z" /></Dots>
        <FxBox>
          <svg width="16" height="14" stroke="#c0c0c0" strokeWidth="2" aria-hidden="true"><path d="M1 1l14 12M15 1L1 13" /></svg>
          <svg width="17" height="13" fill="none" stroke="#c6c6c6" strokeWidth="3" aria-hidden="true"><path d="M1 7l5 4L16 1" /></svg>
          <Fx type="button">fx</Fx>
        </FxBox>
        <FormulaBox>
          <BarInput aria-label="编辑栏" defaultValue="****     180.90      88折" />
          <Expand type="button" aria-label="展开编辑栏"><Chevron d="down" w={9} h={5} sw={2} /></Expand>
        </FormulaBox>
      </FormulaBar>

      <SheetArea>
        <GridPane>
          <Grid>
            <colgroup><RowNoCol />{letters.map((l) => <DataCol key={l} />)}<col /></colgroup>
            <thead>
              <tr>
                <Corner aria-label="全选"><svg width="15" height="15" fill="#b1b1b1"><path d="M15 0v15H0z" /></svg></Corner>
                {letters.map((l) => <ColHead key={l} scope="col" $on={l === "A"}>{l}</ColHead>)}
                <ColHead />
              </tr>
            </thead>
            <tbody>
              {records.map(([amount, discount], i) => {
                const short = amount.length === 5;
                return (
                  <tr key={i}>
                    <RowHead scope="row">{i < 30 ? i + 1 : ""}</RowHead>
                    <Cell $fill={i > 0}>
                      <Record>
                        <Stars $short={short}>{amount && "****"}</Stars>
                        <Amount $short={short}>{amount}</Amount>
                        <Discount $indent={discount.length < 3}>{discount}</Discount>
                      </Record>
                    </Cell>
                    {/* the text of column A runs over B and into C, so B has no right line */}
                    {letters.slice(1).map((l) => <Cell key={l} $open={l === "B"} />)}
                    <Cell />
                  </tr>
                );
              })}
            </tbody>
          </Grid>
          <Selection />
        </GridPane>
        <VScroll>
          <ScrollButton type="button" aria-label="向上滚动"><Tri d="up" /></ScrollButton>
          <VThumb /><VTrack />
          <ScrollButton type="button" aria-label="向下滚动"><Tri d="down" /></ScrollButton>
        </VScroll>
      </SheetArea>

      <Bottom>
        <TabNav><Tri d="left" /><Tri d="right" /></TabNav>
        <SheetTab type="button">Sheet1</SheetTab>
        <button type="button" aria-label="新工作表">
          <svg width="22" height="22" fill="none" stroke="#777" aria-hidden="true"><circle cx="11" cy="11" r="9.500" strokeWidth="1.300" /><path d="M6 11h10M11 6v10" strokeWidth="2" /></svg>
        </button>
        <Spacer />
        <svg width="3" height="14" fill="#aaa"><path d="M0 0h3v3H0zM0 5h3v3H0zM0 10h3v3H0z" /></svg>
        <HScroll>
          <ScrollButton type="button" aria-label="向左滚动"><Tri d="left" /></ScrollButton>
          <HThumb /><HTrack />
          <ScrollButton type="button" aria-label="向右滚动"><Tri d="right" /></ScrollButton>
        </HScroll>
        <Watermark>源代码　宸</Watermark>
      </Bottom>

      <Dialog role="dialog" aria-labelledby="wizard-title" onSubmit={(e) => e.preventDefault()}>
        <TitleBar>
          <Title id="wizard-title">文本分列向导 - 第 2 步，共 3 步</Title>
          <Help type="button">?</Help>
          <button type="button" aria-label="关闭">
            <svg width="14" height="14" stroke="#000" aria-hidden="true"><path d="M1 1l12 12M13 1L1 13" /></svg>
          </button>
        </TitleBar>
        <DialogBody>
          <Intro>请设置分列数据所包含的分隔符号。在预览窗口内可看到分列的效果。</Intro>
          <Options>
            <DelimiterSet>
              <Legend>分隔符号</Legend>
              <Checks>
                {delimiters.map(([id, text, k, after]) => (
                  <CheckRow key={id} $gap={id === "other"}>
                    <Check type="checkbox" id={id} checked={checks[id]} onChange={toggle(id)} />
                    <CheckLabel htmlFor={id} $focus={id === "space"}><Mnemonic text={text} k={k} after={after} /></CheckLabel>
                    {id === "other" && <OtherInput aria-label="其他分隔符号" />}
                  </CheckRow>
                ))}
              </Checks>
            </DelimiterSet>
            <SideOptions>
              <CheckRow>
                <Check type="checkbox" id="merge" checked={checks.merge} onChange={toggle("merge")} />
                <CheckLabel htmlFor="merge"><Mnemonic text="连续分隔符号视为单个处理" k="R" /></CheckLabel>
              </CheckRow>
              <SelectRow>
                <SelectLabel htmlFor="qualifier"><Mnemonic text="文本识别符号" k="Q" after=":" /></SelectLabel>
                <SelectWrap>
                  <Select id="qualifier" defaultValue={'"'}><option>{'"'}</option></Select>
                  <SelectArrow><Chevron d="down" w={9} h={5} /></SelectArrow>
                </SelectWrap>
              </SelectRow>
            </SideOptions>
          </Options>
          <FieldSet>
            <Legend><Mnemonic text="数据预览" k="P" /></Legend>
            <Preview>
              <PreviewPane>
                <PreviewTable>
                  <tbody>
                    {records.slice(0, 6).map(([amount, discount]) => (
                      <tr key={amount}>
                        <PreviewCell $w={40}>****</PreviewCell>
                        <PreviewCell $w={56}>{amount}</PreviewCell>
                        <PreviewCell $last>{discount}</PreviewCell>
                      </tr>
                    ))}
                  </tbody>
                </PreviewTable>
              </PreviewPane>
              <PreviewScroll>
                <Chevron d="up" w={9} h={7} sw={2} />
                <PreviewThumb />
                <Chevron d="down" w={9} h={7} sw={2} />
              </PreviewScroll>
              <PreviewHScroll>
                <Chevron d="left" w={6} h={9} sw={2} />
                <Chevron d="right" w={6} h={9} sw={2} />
              </PreviewHScroll>
            </Preview>
          </FieldSet>
          <Actions>
            <Action type="button" $w={99}>取消</Action>
            <Action type="button" $w={102}>&lt; <Mnemonic text="上一步" k="B" /></Action>
            <Action type="submit" $w={105} $primary><Mnemonic text="下一步" k="N" /> &gt;</Action>
            <Action type="button" $w={99}><Mnemonic text="完成" k="F" /></Action>
          </Actions>
        </DialogBody>
      </Dialog>

      <Pointers width="1300" height="860" fill="#ed1c24" aria-hidden="true">
        <path d="M724 328l1.500-.5L776 356.500l1.500-4.500L788 369.500l-20.500-2.500 2.500-4z" />
        <path d="M714 410l2-.5L775 447.500l1.500-5L787 460l-20.500-3 3-3.500z" />
        <path d="M1202 711.500l2.200-.5L1256.500 800.500l3-3.500L1261 817.500L1244 805.500l4.800-.5z" />
      </Pointers>
    </Page>
  );
}
